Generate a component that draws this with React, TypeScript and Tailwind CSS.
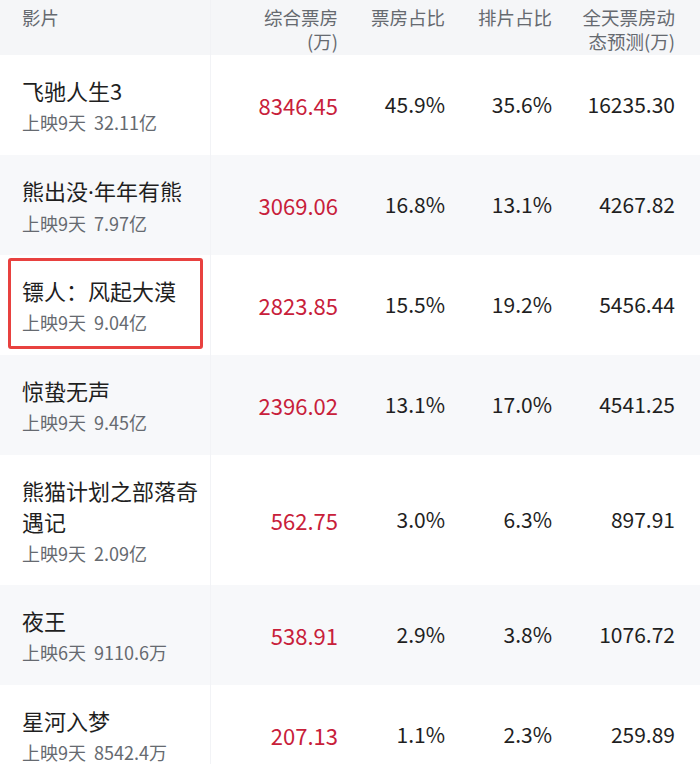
import React from "react";

type Row = {
  name: React.ReactNode[];
  sub: string;
  box: string;
  share: string;
  sched: string;
  forecast: string;
  h: string;
  alt: boolean;
  highlight?: boolean;
};

const dot = <span style={{ fontFamily: '"Noto Sans", sans-serif' }}>·</span>;

const rows: Row[] = [
  { name: ["飞驰人生3"], sub: "上映9天  32.11亿", box: "8346.45", share: "45.9%", sched: "35.6%", forecast: "16235.30", h: "h-[100px]", alt: false },
  { name: [<>熊出没{dot}年年有熊</>], sub: "上映9天  7.97亿", box: "3069.06", share: "16.8%", sched: "13.1%", forecast: "4267.82", h: "h-[100px]", alt: true },
  { name: ["镖人：风起大漠"], sub: "上映9天  9.04亿", box: "2823.85", share: "15.5%", sched: "19.2%", forecast: "5456.44", h: "h-[100px]", alt: false, highlight: true },
  { name: ["惊蛰无声"], sub: "上映9天  9.45亿", box: "2396.02", share: "13.1%", sched: "17.0%", forecast: "4541.25", h: "h-[100px]", alt: true },
  { name: ["熊猫计划之部落奇", "遇记"], sub: "上映9天  2.09亿", box: "562.75", share: "3.0%", sched: "6.3%", forecast: "897.91", h: "h-[130px]", alt: false },
  { name: ["夜王"], sub: "上映6天  9110.6万", box: "538.91", share: "2.9%", sched: "3.8%", forecast: "1076.72", h: "h-[100px]", alt: true },
  { name: ["星河入梦"], sub: "上映9天  8542.4万", box: "207.13", share: "1.1%", sched: "2.3%", forecast: "259.89", h: "h-[100px]", alt: false },
];

const font = { fontFamily: '"Noto Sans CJK SC", "Noto Sans", sans-serif' };

export default function App() {
  return (
    <div className="w-[700px] h-[764px] overflow-hidden bg-white" style={font}>
      {/* header */}
      <div className="flex h-[55px] bg-[#f5f6f8] text-[18.5px] leading-[24px] text-[#666a70]">
        <div className="w-[211px] pl-[22px] pt-[5px] border-r border-[#f1f2f5]">影片</div>
        <div className="w-[139px] pr-[12px] pt-[5px] text-right">
          <div>综合票房</div>
          <div>(万)</div>
        </div>
        <div className="w-[107px] pr-[12px] pt-[5px] text-right whitespace-nowrap">票房占比</div>
        <div className="w-[107px] pr-[12px] pt-[5px] text-right whitespace-nowrap">排片占比</div>
        <div className="w-[136px] pr-[25px] pt-[5px] text-right whitespace-nowrap">
          <div>全天票房动</div>
          <div>态预测(万)</div>
        </div>
      </div>
      {rows.map((r, i) => (
        <div
          key={i}
          className={`flex items-center ${r.h} ${r.alt ? "bg-[#f7f8fa]" : "bg-white"}`}
        >
          <div className="relative w-[211px] h-full flex flex-col justify-center pl-[22px] border-r border-[#f2f3f6]">
            <div className="text-[22px] leading-[31px] text-[#1f1f1f] whitespace-nowrap">
              {r.name.map((n, j) => (
                <div key={j}>{n}</div>
              ))}
            </div>
            <div className="mt-[3px] text-[18px] leading-[26px] text-[#666a70] whitespace-pre">{r.sub}</div>
            {r.highlight && (
              <div className="absolute left-[8px] top-[3px] w-[195px] h-[91px] border-[3px] border-[#e8413f] rounded-[3px]" />
            )}
          </div>
          <div className="w-[139px] pr-[12px] text-right text-[22px] text-[#c8203a]">{r.box}</div>
          <div className="w-[107px] pr-[12px] text-right text-[21px] text-[#1f1f1f]">{r.share}</div>
          <div className="w-[107px] pr-[12px] text-right text-[21px] text-[#1f1f1f]">{r.sched}</div>
          <div className="w-[136px] pr-[25px] text-right text-[21px] text-[#1f1f1f]">{r.forecast}</div>
        </div>
      ))}
    </div>
  );
}
